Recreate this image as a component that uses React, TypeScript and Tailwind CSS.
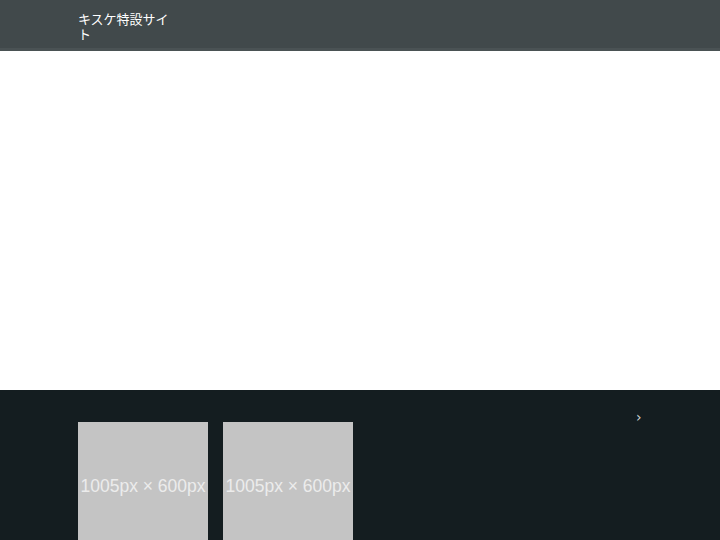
export default function App() {
  return (
    <div className="w-[720px] h-[540px] overflow-hidden bg-white" style={{ fontFamily: '"Noto Sans CJK JP", "Noto Sans", sans-serif' }}>
      <header className="h-[51px] bg-[#41494b] border-b-[3px] border-[#4a5254]">
        <div className="pl-[78px] pt-[11px]">
          <div className="w-[96px] text-[13px] leading-[15px] text-white">キスケ特設サイト</div>
        </div>
      </header>
      <div className="h-[339px] bg-white" />
      <footer className="h-[150px] bg-[#141d20] relative">
        <div className="absolute left-[636px] top-[20px] text-[14px] leading-none text-[#cfd3d4]" style={{ fontFamily: '"DejaVu Sans", sans-serif' }}>›</div>
        <div className="flex gap-[15px] pl-[78px] pt-[32px]">
          {[0, 1].map((i) => (
            <div key={i} className="w-[130px] h-[160px] bg-[#c4c4c4] pt-[53px] flex justify-center text-[17.5px] leading-[22px] text-[#ececec] whitespace-nowrap" style={{ fontFamily: '"Liberation Sans", Arial, sans-serif' }}>
              1005px × 600px
            </div>
          ))}
        </div>
      </footer>
    </div>
  );
}
